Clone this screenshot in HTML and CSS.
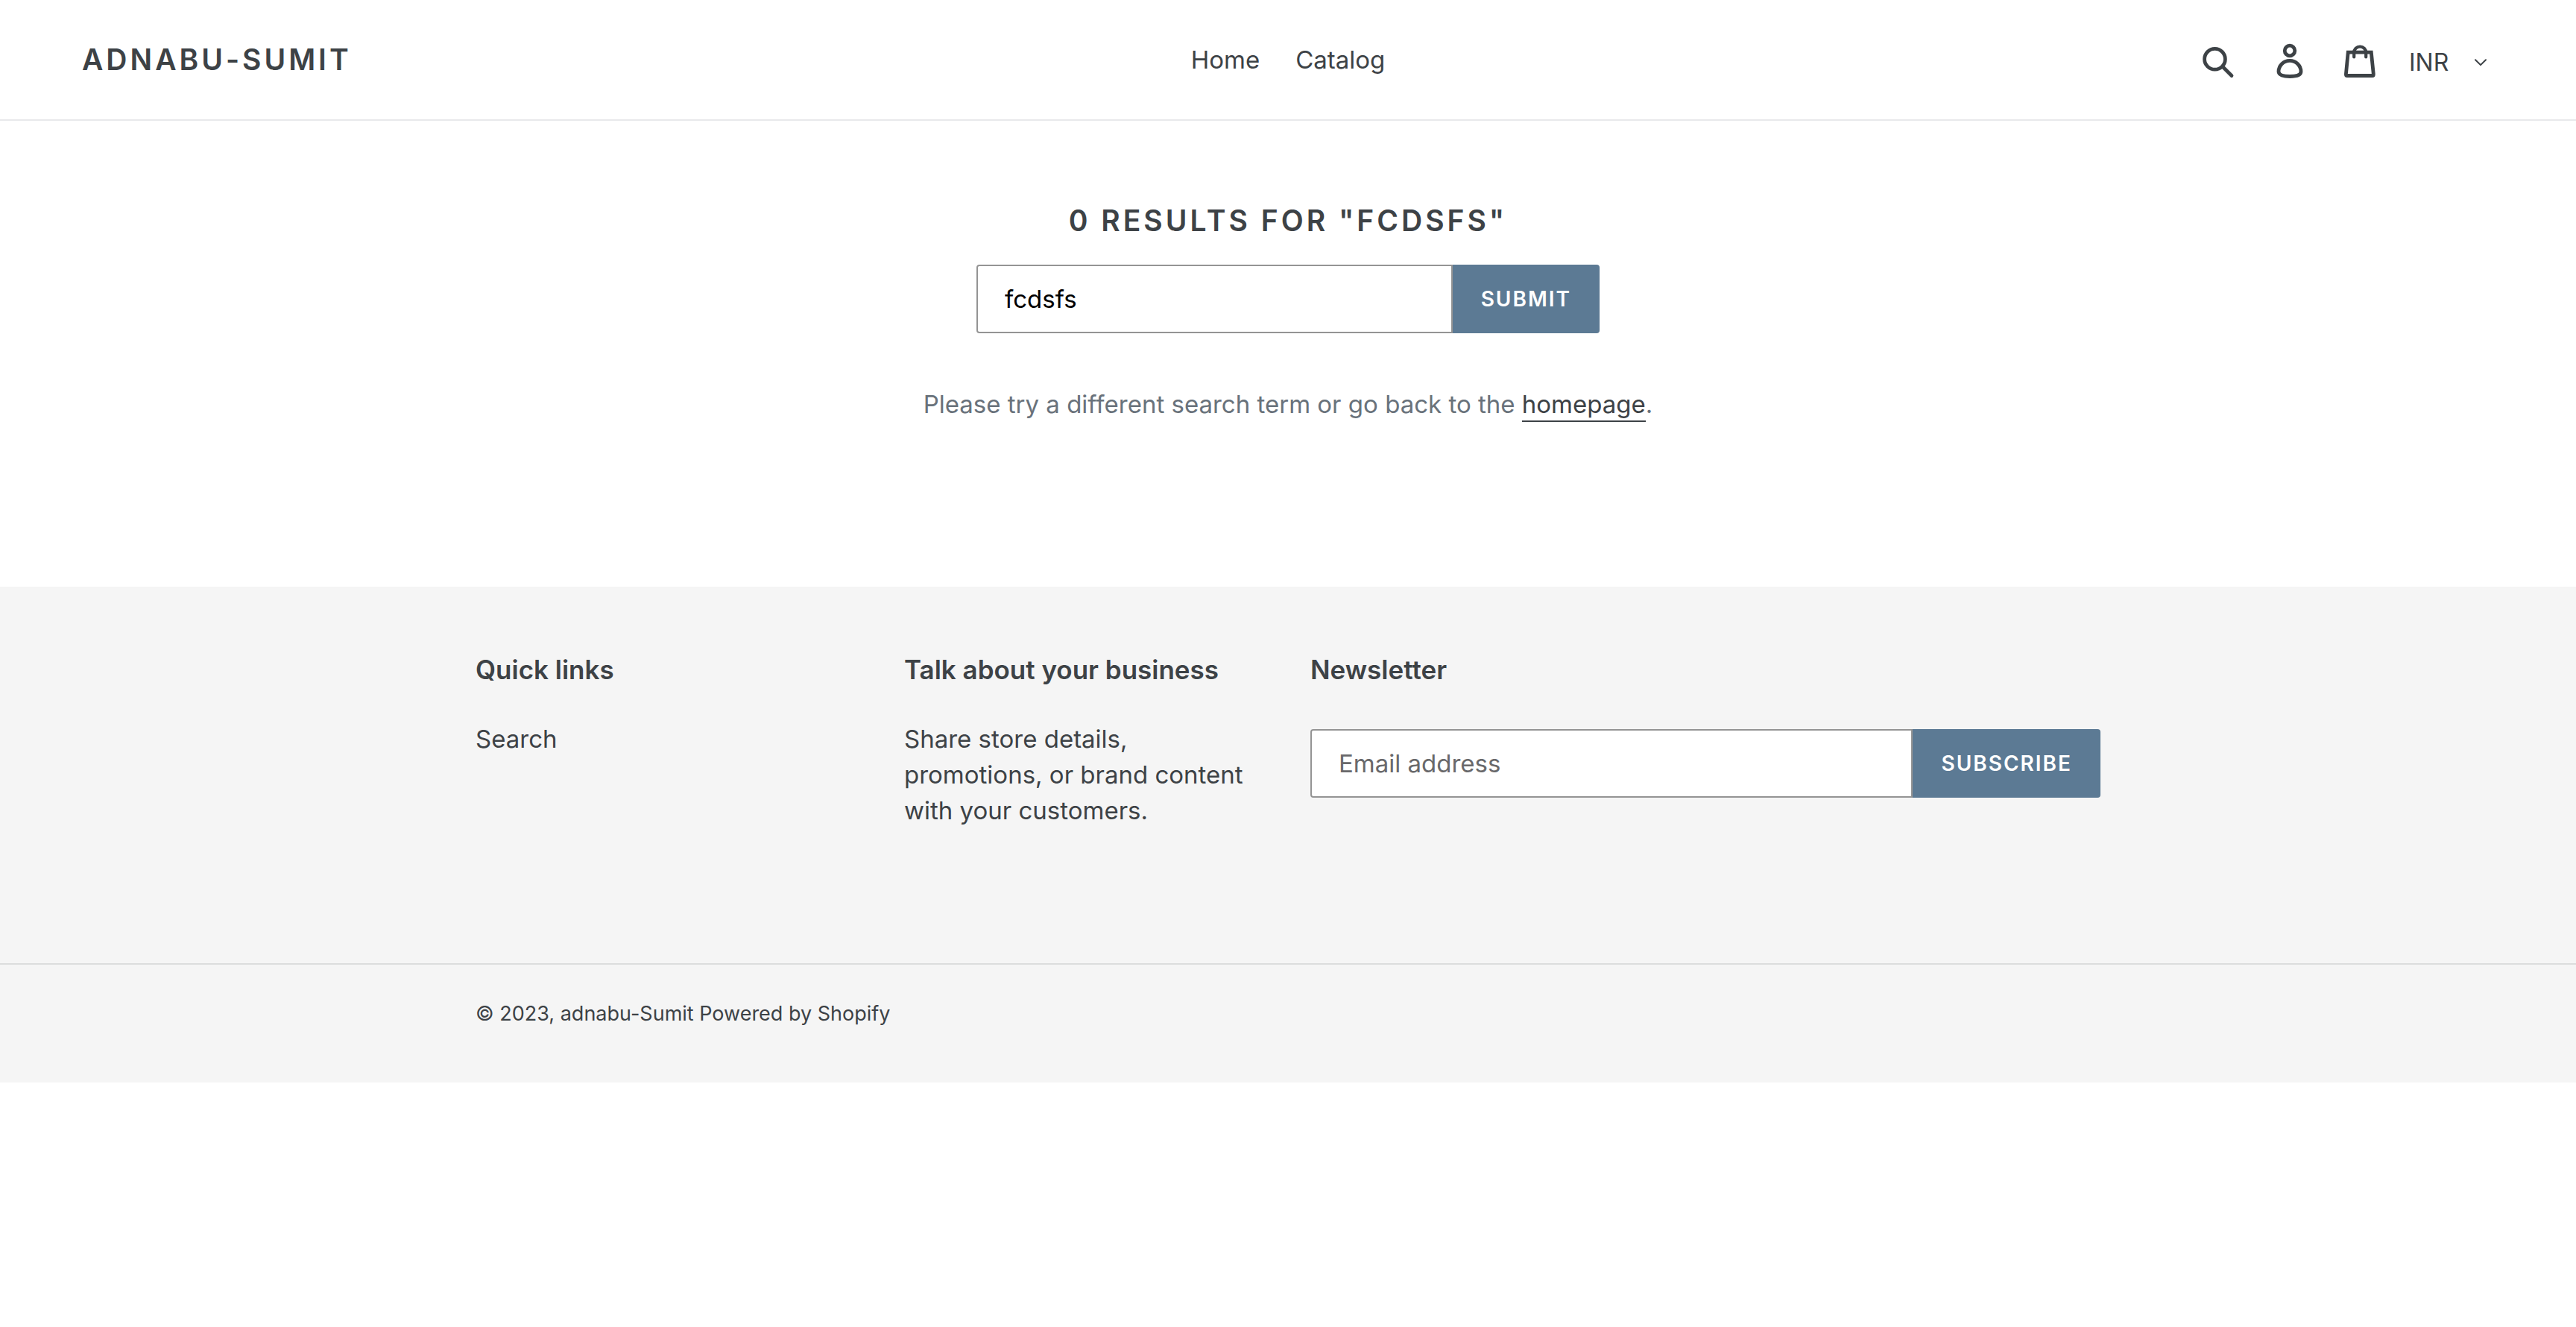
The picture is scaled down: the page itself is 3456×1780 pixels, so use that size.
FILE: index.html
```html
<!DOCTYPE html>
<html lang="en">
<head>
<meta charset="utf-8">
<meta name="viewport" content="width=device-width, initial-scale=1">
<title>Search: 0 results – adnabu-Sumit</title>
<link rel="stylesheet" href="styles.css">
</head>
<body>
<header class="site-header">
  <a class="logo" href="#">adnabu-Sumit</a>
  <nav class="site-nav" aria-label="Main">
    <a href="#">Home</a>
    <a href="#">Catalog</a>
  </nav>
  <div class="header-tools">
    <div class="header-icons">
      <button class="icon-button" type="button" aria-label="Search">
        <svg class="icon" viewBox="0 0 44 52" aria-hidden="true"><circle cx="17.5" cy="25.3" r="13.9"/><path class="cap-square" d="M28 35.5 40 47.5"/></svg>
      </button>
      <a class="icon-button" href="#" aria-label="Log in">
        <svg class="icon" viewBox="0 0 44 52" aria-hidden="true"><circle cx="23" cy="14" r="6.8"/><path d="M23 27.4c8.500 0 14.900 6.800 15 14.600 0 4.500-6.500 6.500-15 6.500s-15-2-15-6.500c.1-7.800 6.500-14.600 15-14.600z"/></svg>
      </a>
      <a class="icon-button" href="#" aria-label="Cart">
        <svg class="icon" viewBox="0 0 44 52" aria-hidden="true"><path class="bag-body" d="M6.200 16.200H37.300L40.300 45.400Q40.300 47.500 39 47.500H4.900Q3.400 47.500 3.400 45.400Z"/><path class="cap-round" d="M14.200 22.500V16.500a8 8 0 0 1 16 0V22.500"/></svg>
      </a>
    </div>
    <div class="currency">
      <select class="currency-select" aria-label="Currency"><option>INR</option><option>USD</option></select>
      <svg class="currency-arrow" viewBox="0 0 16 10" aria-hidden="true"><path d="M1 1.200 8 8.200 15 1.200"/></svg>
    </div>
  </div>
</header>

<main class="search-page">
  <h1 class="search-title">0 results for "fcdsfs"</h1>
  <form class="input-group search-form">
    <input class="field" type="text" value="fcdsfs" aria-label="Search our store">
    <button class="button" type="button">Submit</button>
  </form>
  <p class="search-hint">Please try a different search term or go back to the <a href="#">homepage</a>.</p>
</main>

<footer class="site-footer">
  <div class="footer-top">
    <section>
      <h2 class="footer-title">Quick links</h2>
      <ul class="footer-links"><li><a href="#">Search</a></li></ul>
    </section>
    <section>
      <h2 class="footer-title">Talk about your business</h2>
      <p class="footer-text">Share store details, promotions, or brand content with your customers.</p>
    </section>
    <section>
      <h2 class="footer-title">Newsletter</h2>
      <form class="input-group newsletter-form">
        <input class="field" type="email" placeholder="Email address" aria-label="Email address">
        <button class="button" type="button">Subscribe</button>
      </form>
    </section>
  </div>
  <div class="footer-bottom">
    <p class="copyright">© 2023, <a href="#">adnabu-Sumit</a> <a href="#">Powered by Shopify</a></p>
  </div>
</footer>
</body>
</html>
```
FILE: styles.css
```css
:root {
  --ink: #3d4246;
  --muted: #69727b;
  --accent: #5c7a94;
  --field-border: #949494;
  --page-width: 2180px;
}

* { box-sizing: border-box; }

body {
  margin: 0;
  background: #fff;
  color: var(--ink);
  font-family: Inter, "Liberation Sans", sans-serif;
  font-size: 33px;
  line-height: 48px;
}

a { color: inherit; text-decoration: none; }
h1, h2, p, ul { margin: 0; padding: 0; }
ul { list-style: none; }
button, input, select { font: inherit; }

/* Header */
.site-header {
  display: grid;
  grid-template-columns: 1fr auto 1fr;
  align-items: center;
  min-height: 162px;
  padding: 0 110px;
  border-bottom: 2px solid #e8e9eb;
}

.logo {
  font-size: 39px;
  font-weight: 600;
  letter-spacing: 4px;
  text-transform: uppercase;
}

.site-nav { display: flex; gap: 48px; }

.header-tools {
  display: flex;
  justify-content: flex-end;
  align-items: center;
  gap: 44px;
}

.header-icons { display: flex; gap: 51px; }

.icon-button {
  display: block;
  padding: 0;
  border: 0;
  background: none;
  color: inherit;
}

.icon {
  display: block;
  width: 44px;
  height: 52px;
  fill: none;
  stroke: currentColor;
  stroke-width: 4.800;
}

.cap-round { stroke-linecap: round; stroke-width: 4.200; }
.cap-square { stroke-linecap: round; }
.bag-body { stroke-linejoin: miter; }

.currency {
  display: grid;
  align-items: center;
  width: 114px;
  padding-top: 8px;
}

.currency-select {
  grid-area: 1 / 1;
  width: 100%;
  padding: 0;
  border: 0;
  background: none;
  color: inherit;
  font-size: 32px;
  appearance: none;
}

.currency-arrow {
  grid-area: 1 / 1;
  justify-self: end;
  width: 16px;
  height: 10px;
  margin-right: 10px;
  fill: none;
  stroke: currentColor;
  stroke-width: 2;
  stroke-linecap: round;
  pointer-events: none;
}

/* Search results */
.search-page {
  display: flex;
  flex-direction: column;
  align-items: center;
  padding: 110px 110px 221px;
}

.search-title {
  margin-bottom: 35px;
  font-size: 39px;
  font-weight: 600;
  letter-spacing: 4px;
  text-transform: uppercase;
}

.input-group { display: flex; height: 92px; }

.field {
  flex: 1;
  min-width: 0;
  padding: 0 36px;
  border: 2px solid var(--field-border);
  border-radius: 4px 0 0 4px;
  background: #fff;
  color: #000;
}

.field::placeholder { color: #69696b; opacity: 1; }

.button {
  padding: 0 38px;
  border: 0;
  border-radius: 0 4px 4px 0;
  background: var(--accent);
  color: #fff;
  font-size: 28px;
  font-weight: 600;
  letter-spacing: 2px;
  text-transform: uppercase;
}

.search-form { width: 836px; }

.search-hint { margin-top: 71px; color: var(--muted); }

.search-hint a {
  padding-bottom: 2px;
  border-bottom: 2px solid currentColor;
  color: var(--ink);
}

/* Footer */
.site-footer { background: #f5f5f5; }

.footer-top {
  display: grid;
  grid-template-columns: 515fr 485fr 1060fr;
  gap: 60px;
  max-width: var(--page-width);
  margin: 0 auto;
  padding: 87px 0 181px;
}

.footer-title {
  margin-bottom: 45px;
  font-size: 35px;
  font-weight: 600;
}

.newsletter-form { margin-top: 56px; }

.footer-bottom { border-top: 2px solid #dcdddd; }

.copyright {
  max-width: var(--page-width);
  margin: 0 auto;
  padding: 42px 0 68px;
  font-size: 27px;
}
```
